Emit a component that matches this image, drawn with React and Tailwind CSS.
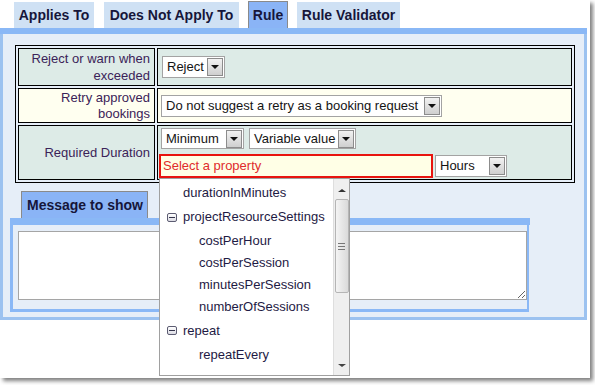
import React from "react";

const font = "font-['Liberation_Sans',Arial,sans-serif]";

function Arrow() {
  return (
    <div className="w-[16px] h-[18px] mr-[1px] flex items-center justify-center border border-[#8c8c8c] bg-gradient-to-b from-[#f2f2f2] to-[#cfcfcf]">
      <div className="w-0 h-0 border-l-[4px] border-r-[4px] border-t-[4px] border-l-transparent border-r-transparent border-t-[#111]" />
    </div>
  );
}

function Select({ label, w, h = "h-[22px]" }) {
  return (
    <div className={`inline-flex items-center ${w} ${h} border border-[#a3a3a3] bg-white`}>
      <span className="flex-1 pl-[4px] text-[13px] text-[#141414] whitespace-nowrap">{label}</span>
      <Arrow />
    </div>
  );
}

function Minus() {
  return (
    <div className="w-[10px] h-[9px] rounded-[2px] border border-[#5c5c72] bg-gradient-to-b from-white to-[#dcdce4] flex items-center justify-center">
      <div className="w-[6px] h-[1px] bg-[#33334a]" />
    </div>
  );
}

const items = [
  { t: "durationInMinutes", lvl: 1, h: "h-[22px]" },
  { t: "projectResourceSettings", lvl: 0, h: "h-[26px]" },
  { t: "costPerHour", lvl: 2, h: "h-[22px]" },
  { t: "costPerSession", lvl: 2, h: "h-[22px]" },
  { t: "minutesPerSession", lvl: 2, h: "h-[22px]" },
  { t: "numberOfSessions", lvl: 2, h: "h-[22px]" },
  { t: "repeat", lvl: 0, h: "h-[25px]" },
  { t: "repeatEvery", lvl: 2, h: "h-[24px]" },
  { t: "", lvl: 0, h: "h-[24px]" },
];

function PropertyList() {
  return (
    <div className="absolute left-0 top-full z-20 w-[191px] h-[198px] bg-white border border-[#a0a0a0] overflow-hidden flex">
      <div className="flex-1 pt-[3px]">
        {items.map((it, i) => (
          <div key={i} className={`flex items-center ${it.h} text-[13px] text-[#1e1a44] whitespace-nowrap`}>
            {it.lvl === 0 && (
              <div className="flex items-center gap-[6px] pl-[7px]">
                <Minus />
                <span>{it.t}</span>
              </div>
            )}
            {it.lvl === 1 && <span className="pl-[23px]">{it.t}</span>}
            {it.lvl === 2 && <span className="pl-[39px]">{it.t}</span>}
          </div>
        ))}
      </div>
      <div className="w-[16px] h-full bg-[#efefef] border-l border-[#dedede] flex flex-col items-center">
        <div className="h-[20px] pt-[3px] flex items-center">
          <div className="w-0 h-0 border-l-[4px] border-r-[4px] border-b-[3px] border-l-transparent border-r-transparent border-b-[#333]" />
        </div>
        <div className="w-[14px] h-[94px] rounded-[2px] border border-[#b5b5b5] bg-gradient-to-r from-[#f4f4f4] to-[#dadada] flex flex-col items-center justify-center gap-[2px]">
          <div className="w-[7px] h-[1px] bg-[#777]" />
          <div className="w-[7px] h-[1px] bg-[#777]" />
          <div className="w-[7px] h-[1px] bg-[#777]" />
        </div>
        <div className="flex-1" />
        <div className="h-[20px] flex items-center">
          <div className="w-0 h-0 border-l-[4px] border-r-[4px] border-t-[3px] border-l-transparent border-r-transparent border-t-[#444]" />
        </div>
      </div>
    </div>
  );
}

function Tab({ label, w, active }) {
  return active ? (
    <div className={`${w} h-[27px] flex items-center justify-center bg-[#8ab4f6] border border-b-0 border-[#8a8a8a] text-[14px] font-bold text-[#16163a]`}>
      {label}
    </div>
  ) : (
    <div className={`${w} h-[26px] flex items-center justify-center bg-[#cfe1f4] text-[14px] font-bold text-[#16163a]`}>
      {label}
    </div>
  );
}

export default function App() {
  return (
    <div className={`w-[595px] h-[385px] bg-white ${font}`}>
      <div className="w-[590px] h-[378px] bg-white shadow-[3px_3px_4px_rgba(0,0,0,0.5)]">
        {/* tabs */}
        <div className="flex items-end h-[28px] pl-[14px] gap-[9px]">
          <Tab label="Applies To" w="w-[80px]" />
          <Tab label="Does Not Apply To" w="w-[135px] ml-[1px]" />
          <Tab label="Rule" w="w-[40px]" active />
          <Tab label="Rule Validator" w="w-[103px]" />
        </div>

        {/* rule panel */}
        <div className="w-[587px] bg-[#e6eef8] border-l-[3px] border-r-[3px] border-b-[3px] border-[#9cc2f0]">
          <div className="h-[6px] bg-[#8ab8f6] -mx-[3px]" />
          <table className="ml-[12px] mt-[11px] w-[560px] border-separate border-spacing-[2px] border border-black text-[13px]">
            <tbody>
              <tr className="bg-[#ddebe7]">
                <td className="w-[137px] h-[38px] border border-black text-right align-middle pr-[4px] leading-[17px] text-[#3b2358]">
                  Reject or warn when exceeded
                </td>
                <td className="border border-black pl-[4px] align-middle">
                  <Select label="Reject" w="w-[63px]" />
                </td>
              </tr>
              <tr className="bg-[#fffff0]">
                <td className="h-[35px] border border-black text-right align-middle pr-[4px] leading-[16px] text-[#3b2358]">
                  Retry approved bookings
                </td>
                <td className="border border-black pl-[3px] align-middle">
                  <Select label="Do not suggest a retry as a booking request" w="w-[281px]" />
                </td>
              </tr>
              <tr className="bg-[#ddebe7]">
                <td className="h-[55px] border border-black text-right align-middle pr-[4px] text-[#3b2358]">
                  Required Duration
                </td>
                <td className="border border-black pl-[1px] pt-[2px] align-top">
                  <div className="flex gap-[5px] ml-[2px]">
                    <Select label="Minimum" w="w-[83px]" h="h-[21px]" />
                    <Select label="Variable value" w="w-[107px]" h="h-[21px]" />
                  </div>
                  <div className="flex items-center gap-[2px] mt-[5px]">
                    <div className="relative">
                      <div className="w-[274px] h-[24px] border-2 border-[#e8140f] bg-[#ffffe6] flex items-center pl-[2px] text-[13px] text-[#e02c2c]">
                        Select a property
                      </div>
                      <PropertyList />
                    </div>
                    <Select label="Hours" w="w-[72px]" />
                  </div>
                </td>
              </tr>
            </tbody>
          </table>

          {/* message box */}
          <div className="ml-[18px] mt-[8px] w-[127px] h-[27px] flex items-center pl-[5px] bg-[#8ab4f6] border border-b-0 border-[#8a8a8a] text-[14px] font-bold text-[#16163a]">
            Message to show
          </div>
          <div className="ml-[7px] mb-[5px] w-[519px] bg-[#e6eef8] border-l-[3px] border-r-[2px] border-b-[3px] border-[#8ab8f6]">
            <div className="h-[7px] bg-[#8ab8f6] -mx-[3px]" />
            <div className="pl-[5px] pt-[6px] pb-[9px]">
              <textarea className="block w-[509px] h-[69px] border border-[#a5a5a5] bg-white" />
            </div>
          </div>
        </div>
      </div>
    </div>
  );
}
